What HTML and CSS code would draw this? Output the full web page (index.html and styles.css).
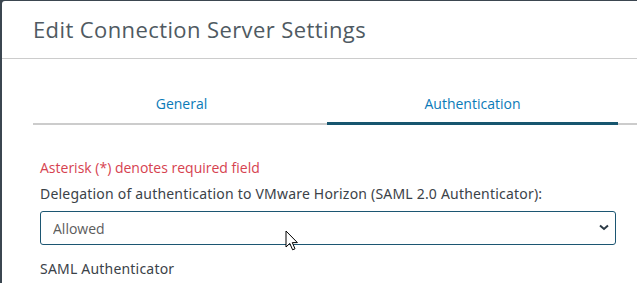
FILE: index.html
```html
<!DOCTYPE html>
<html lang="en">

<head>
    <meta charset="UTF-8">
    <meta name="viewport" content="width=device-width, initial-scale=1.0">
    <title>Edit Connection Server Settings</title>
    <link rel="stylesheet" href="styles.css">
</head>

<body>
    <div class="modal">
        <div class="modal-header">
            <h3 class="modal-title">Edit Connection Server Settings</h3>
        </div>

        <div class="modal-body">
            <!-- Zakładki -->
            <div class="tabs">
                <a class="tab">General</a>
                <a class="tab active">Authentication</a>
            </div>

            <div class="form">
                <p class="required-note">Asterisk (*) denotes required field</p>
                <label class="field-label" for="delegacja">Delegation of authentication to VMware Horizon (SAML 2.0 Authenticator):</label>
                <div class="select-wrap">
                    <select id="delegacja">
                        <option>Allowed</option>
                        <option>Disabled</option>
                        <option>Required</option>
                    </select>
                    <svg class="chevron" width="10" height="7" viewBox="0 0 10 7">
                        <path d="M1 1.5 L5 5 L9 1.5" fill="none" stroke="#2b3a45" stroke-width="2"/>
                    </svg>
                </div>
                <div class="section-label">SAML Authenticator</div>
            </div>
        </div>
    </div>

    <!-- Kursor myszy nad polem -->
    <svg class="cursor" width="14" height="22" viewBox="0 0 14 22">
        <path d="M1 1 L1 17 L4.8 13.4 L7.6 19.8 L10 18.8 L7.3 12.6 L12.4 12.6 Z" fill="#fff" stroke="#000" stroke-width="1" stroke-linejoin="round"/>
    </svg>
</body>

</html>
```

FILE: styles.css
```css
/* Tło za oknem */
body {
    margin: 0;
    padding: 0;
    height: 100vh;
    overflow: hidden;
    background-color: #3b4650;
    font-family: "Open Sans", "Noto Sans", sans-serif;
}

.modal {
    margin: 1px 0 0 2px;
    height: 100%;
    background-color: #fff;
    border-top-left-radius: 3px;
}

.modal-header {
    height: 57px;
    border-bottom: 1px solid #cccccc;
    padding-left: 31px;
    box-sizing: content-box;
}

.modal-title {
    margin: 0;
    padding-top: 13px;
    font-family: "Open Sans", sans-serif;
    font-weight: 400;
    font-size: 22px;
    letter-spacing: 0.4px;
    line-height: 30px;
    color: #4f5a62;
}

.modal-body {
    padding-left: 31px;
}

/* Zakładki */
.tabs {
    display: flex;
    margin-top: 24px;
    padding-left: 3px;
    box-shadow: inset 0 -2px 0 #cccccc;
}

.tab {
    width: 291px;
    padding: 11px 0;
    line-height: 20px;
    text-align: center;
    font-size: 14px;
    color: #0a7ab8;
    cursor: pointer;
}

.tab.active {
    box-shadow: inset 0 -3px 0 #17566f;
}

/* Formularz */
.form {
    padding-left: 7px;
    padding-right: 21px;
}

.required-note {
    margin: 33px 0 0;
    font-size: 14px;
    line-height: 20px;
    color: #d6424f;
}

.field-label {
    display: block;
    margin-top: 6px;
    font-family: "Noto Sans", sans-serif;
    font-size: 14px;
    letter-spacing: 0.2px;
    line-height: 20px;
    color: #3b4248;
}

.select-wrap {
    position: relative;
    margin-top: 7px;
}

select {
    width: 100%;
    height: 34px;
    padding: 0 12px;
    border: 1px solid #1c5672;
    border-radius: 3px;
    background-color: #fff;
    font-family: "Open Sans", sans-serif;
    font-size: 14px;
    color: #5c5c5c;
    appearance: none;
    -webkit-appearance: none;
    outline: none;
}

.chevron {
    position: absolute;
    right: 7px;
    top: 13px;
    pointer-events: none;
}

.section-label {
    margin-top: 14px;
    font-family: "Noto Sans", sans-serif;
    font-size: 14px;
    letter-spacing: 0.2px;
    line-height: 20px;
    color: #3b4248;
}

.cursor {
    position: absolute;
    left: 285px;
    top: 230px;
}
```
